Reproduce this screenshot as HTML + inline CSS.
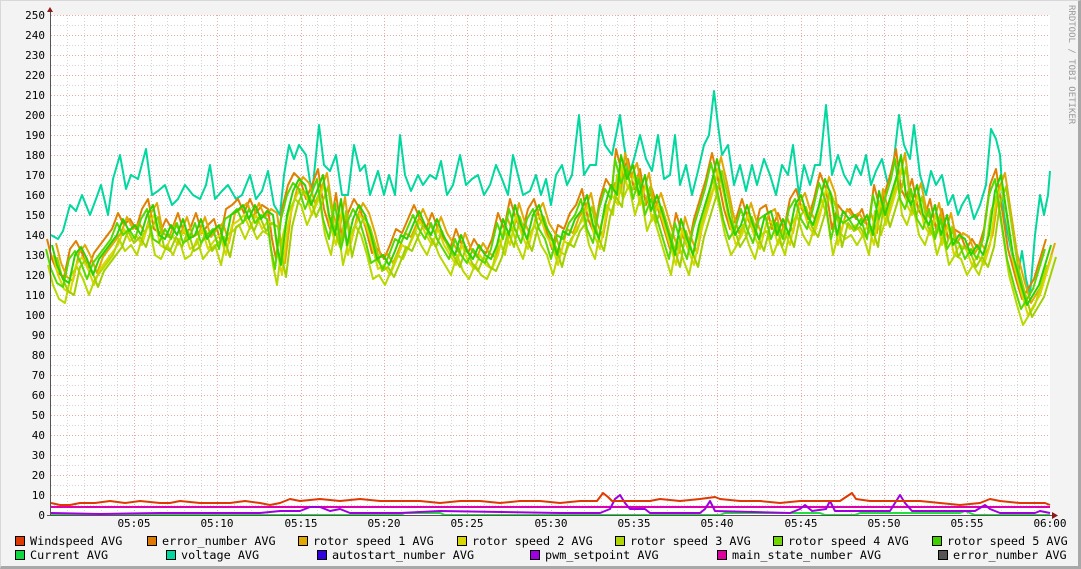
<!DOCTYPE html>
<html><head><meta charset="utf-8"><style>
html,body{margin:0;padding:0}
body{width:1081px;height:569px;background:#f3f3f3;position:relative;overflow:hidden;font-family:"DejaVu Sans Mono","Liberation Mono",monospace;}
.frame{position:absolute;left:0;top:0;box-sizing:border-box;width:1081px;height:569px;border-right:3px solid #a8a8a8;border-bottom:3px solid #a8a8a8;border-top:1px solid #d8d8d8;border-left:1px solid #d8d8d8}
.lg{position:absolute;font-size:11.8px;color:#000;white-space:pre;line-height:14px}
.sw{position:absolute;width:8px;height:8px;border:1px solid #000}
svg{position:absolute;left:0;top:0}
</style></head><body>
<div class="frame"></div>
<svg width="1081" height="569" xmlns="http://www.w3.org/2000/svg" font-family="DejaVu Sans Mono, Liberation Mono, monospace">
<defs>
<polyline id="r" fill="none" vector-effect="non-scaling-stroke" points="51,135 56,125 62,118 68,116 74,130 80,134 86,128 92,120 98,128 104,132 110,136 116,140 122,148 128,142 134,145 140,140 146,150 152,155 158,140 164,138 170,145 176,140 182,148 188,138 194,140 200,148 206,138 212,142 218,145 224,135 230,150 236,152 242,155 248,148 254,155 260,148 266,152 272,150 276,135 280,125 286,150 292,162 298,168 304,165 310,155 316,162 322,170 328,150 334,140 340,158 346,135 352,148 358,155 364,150 370,140 376,128 382,130 388,125 394,132 400,140 406,138 412,145 418,152 424,145 430,140 436,148 442,140 448,135 454,130 460,140 466,132 472,128 478,135 484,130 490,128 496,135 502,148 508,140 514,155 520,145 526,138 532,150 538,155 544,145 550,140 556,130 562,142 568,140 574,148 580,152 586,160 592,145 598,138 604,155 610,165 616,160 620,180 626,168 632,175 638,160 644,170 650,152 656,160 662,150 668,140 674,130 680,148 686,138 692,130 698,145 704,155 710,165 716,178 722,165 728,150 734,140 740,145 746,155 752,145 758,138 764,150 770,152 776,140 782,148 788,140 794,155 800,160 806,150 812,145 818,155 824,168 830,160 836,140 842,152 848,148 854,150 860,145 866,150 872,140 878,162 884,150 890,160 896,170 900,180 905,160 910,155 916,165 922,150 928,145 934,155 940,140 946,150 952,135 958,140 964,138 970,130 976,135 982,130 988,140 994,162 1000,170 1006,150 1012,130 1020,115 1026,105 1032,110 1038,115 1044,125 1050,135"/>
</defs>
<rect x="51" y="15" width="999" height="500" fill="#fff"/>
<g stroke="#d4d4d4" stroke-width="1" stroke-dasharray="1,2" shape-rendering="crispEdges">
<path d="M51 505.5H1050M51 485.5H1050M51 465.5H1050M51 445.5H1050M51 425.5H1050M51 405.5H1050M51 385.5H1050M51 365.5H1050M51 345.5H1050M51 325.5H1050M51 305.5H1050M51 285.5H1050M51 265.5H1050M51 245.5H1050M51 225.5H1050M51 205.5H1050M51 185.5H1050M51 165.5H1050M51 145.5H1050M51 125.5H1050M51 105.5H1050M51 85.5H1050M51 65.5H1050M51 45.5H1050M51 25.5H1050"/>
<path d="M67.5 15V515M84.5 15V515M101.5 15V515M117.5 15V515M151.5 15V515M167.5 15V515M184.5 15V515M201.5 15V515M234.5 15V515M251.5 15V515M267.5 15V515M284.5 15V515M317.5 15V515M334.5 15V515M351.5 15V515M367.5 15V515M401.5 15V515M417.5 15V515M434.5 15V515M451.5 15V515M484.5 15V515M501.5 15V515M517.5 15V515M534.5 15V515M567.5 15V515M584.5 15V515M601.5 15V515M617.5 15V515M651.5 15V515M667.5 15V515M684.5 15V515M701.5 15V515M734.5 15V515M751.5 15V515M767.5 15V515M784.5 15V515M817.5 15V515M834.5 15V515M851.5 15V515M867.5 15V515M901.5 15V515M917.5 15V515M934.5 15V515M951.5 15V515M984.5 15V515M1001.5 15V515M1017.5 15V515M1034.5 15V515"/>
</g>
<g stroke="#e8a8a8" stroke-width="1" stroke-dasharray="1,2" shape-rendering="crispEdges">
<path d="M51 495.5H1050M51 475.5H1050M51 455.5H1050M51 435.5H1050M51 415.5H1050M51 395.5H1050M51 375.5H1050M51 355.5H1050M51 335.5H1050M51 315.5H1050M51 295.5H1050M51 275.5H1050M51 255.5H1050M51 235.5H1050M51 215.5H1050M51 195.5H1050M51 175.5H1050M51 155.5H1050M51 135.5H1050M51 115.5H1050M51 95.5H1050M51 75.5H1050M51 55.5H1050M51 35.5H1050M51 15.5H1050"/>
<path d="M134.5 15V515M217.5 15V515M301.5 15V515M384.5 15V515M467.5 15V515M551.5 15V515M634.5 15V515M717.5 15V515M801.5 15V515M884.5 15V515M967.5 15V515"/>
</g>
<g fill="#000" font-size="11" text-anchor="end">
<text x="45" y="19">250</text><text x="45" y="39">240</text><text x="45" y="59">230</text><text x="45" y="79">220</text><text x="45" y="99">210</text><text x="45" y="119">200</text><text x="45" y="139">190</text><text x="45" y="159">180</text><text x="45" y="179">170</text><text x="45" y="199">160</text><text x="45" y="219">150</text><text x="45" y="239">140</text><text x="45" y="259">130</text><text x="45" y="279">120</text><text x="45" y="299">110</text><text x="45" y="319">100</text><text x="45" y="339">90</text><text x="45" y="359">80</text><text x="45" y="379">70</text><text x="45" y="399">60</text><text x="45" y="419">50</text><text x="45" y="439">40</text><text x="45" y="459">30</text><text x="45" y="479">20</text><text x="45" y="499">10</text><text x="45" y="519">0</text>
</g>
<g fill="#000" font-size="11" text-anchor="middle">
<text x="134" y="527">05:05</text><text x="217" y="527">05:10</text><text x="301" y="527">05:15</text><text x="384" y="527">05:20</text><text x="467" y="527">05:25</text><text x="551" y="527">05:30</text><text x="634" y="527">05:35</text><text x="717" y="527">05:40</text><text x="801" y="527">05:45</text><text x="884" y="527">05:50</text><text x="967" y="527">05:55</text><text x="1050" y="527">06:00</text>
</g>
<text x="1069" y="5" font-size="9" fill="#999" transform="rotate(90 1069 5)">RRDTOOL / TOBI OETIKER</text>
<g transform="translate(0,515) scale(1,-2)" fill="none" stroke-width="2" stroke-linejoin="round">
<polyline vector-effect="non-scaling-stroke" stroke="#00d8a0" points="51,140 58,138 63,142 70,155 76,152 82,160 90,150 96,158 101,165 108,150 113,168 120,180 126,163 131,170 138,168 146,183 152,160 158,162 165,165 172,155 178,158 185,165 193,160 200,158 206,165 210,175 215,158 222,162 228,165 236,158 242,160 250,170 256,158 262,162 268,172 274,155 280,150 284,170 289,185 294,178 299,185 306,180 312,160 319,195 324,175 330,172 336,180 342,160 348,160 354,185 360,172 365,175 370,160 378,172 384,160 389,170 395,160 400,190 405,170 411,162 418,170 423,165 430,170 436,168 441,177 447,160 453,165 460,180 466,165 472,168 478,170 484,160 490,165 496,175 502,168 508,160 513,180 518,170 523,160 530,162 536,170 541,160 546,168 551,155 556,170 562,175 567,165 572,170 579,200 584,170 590,175 596,175 600,195 605,185 612,180 620,200 624,185 629,170 634,178 640,190 646,178 652,172 658,190 664,168 670,170 675,190 680,165 686,175 692,160 698,172 704,185 709,190 714,212 718,195 722,180 728,185 734,165 740,175 746,162 752,175 757,165 764,178 770,170 776,160 782,175 788,170 793,185 799,160 804,175 810,165 815,175 820,175 826,205 832,170 838,180 844,170 850,165 856,175 861,170 866,180 871,165 876,172 882,178 888,165 894,178 899,200 904,185 910,178 914,195 920,170 926,160 931,172 936,165 942,170 948,155 953,160 958,150 962,155 968,160 974,148 980,155 986,165 991,193 996,188 1000,180 1004,150 1008,140 1013,128 1018,120 1022,132 1026,118 1030,110 1035,140 1040,160 1044,150 1048,160 1050,172"/>
<use href="#r" stroke="#e08000" transform="translate(-4,3)"/>
<use href="#r" stroke="#e0a800" transform="translate(5,1)"/>
<use href="#r" stroke="#d8d800" transform="translate(2,-5)"/>
<use href="#r" stroke="#b8d800" transform="translate(-3,-10)"/>
<use href="#r" stroke="#a0d000" transform="translate(6,-6)"/>
<use href="#r" stroke="#58d800" transform="translate(-5,-2)"/>
<use href="#r" stroke="#30d000" transform="translate(1,0)"/>
<polyline vector-effect="non-scaling-stroke" stroke="#20e040" points="51,0 400,0 405,1 440,1 445,0 720,0 725,1 820,1 825,0 855,0 860,1 960,1 965,2 975,0 1050,0"/>
<polyline vector-effect="non-scaling-stroke" stroke="#e000b0" points="51,4 1050,4"/>
<polyline vector-effect="non-scaling-stroke" stroke="#a000e0" points="51,1 100,0.5 160,1 260,1 280,2 300,2 310,4 320,4 330,2 340,3 350,1 400,1 440,2 560,1 600,1 610,3 615,8 620,10 625,6 630,3 645,3 650,1 700,1 705,3 710,7 712,5 715,2 790,1 800,3 805,5 812,2 826,3 830,7 835,2 890,2 895,6 900,10 905,6 912,2 975,2 985,5 990,3 1000,1 1035,1 1040,2 1050,1"/>
<polyline vector-effect="non-scaling-stroke" stroke="#e03800" points="51,6 60,5 70,5 80,6 95,6 110,7 125,6 140,7 160,6 170,6 180,7 200,6 215,6 230,6 245,7 260,6 270,5 280,6 290,8 300,7 320,8 340,7 360,8 380,7 400,7 420,7 440,6 460,7 480,7 500,6 520,7 540,7 560,6 580,7 597,7 603,11 608,9 612,7 630,7 650,7 660,8 680,7 700,8 715,9 720,8 740,7 760,7 780,6 800,7 820,7 840,7 846,9 852,11 856,8 870,7 890,7 905,7 920,7 940,6 960,5 980,6 990,8 1000,7 1020,6 1035,6 1045,6 1050,5"/>
</g>
<g stroke="#555" stroke-width="1" shape-rendering="crispEdges">
<path d="M50.5 12V516M47 515.5H1054"/>
</g>
<path d="M47 12L53 12L50 7Z" fill="#8b1a1a"/>
<path d="M1052 512L1052 519L1058 515.5Z" fill="#8b1a1a"/>
</svg>
<div class="sw" style="left:15px;top:536px;background:#e03800"></div><div class="lg" style="left:30px;top:534px">Windspeed AVG</div>
<div class="sw" style="left:147px;top:536px;background:#e07800"></div><div class="lg" style="left:162px;top:534px">error_number AVG</div>
<div class="sw" style="left:298px;top:536px;background:#e0a800"></div><div class="lg" style="left:313px;top:534px">rotor speed 1 AVG</div>
<div class="sw" style="left:457px;top:536px;background:#d8d800"></div><div class="lg" style="left:472px;top:534px">rotor speed 2 AVG</div>
<div class="sw" style="left:615px;top:536px;background:#b0d800"></div><div class="lg" style="left:630px;top:534px">rotor speed 3 AVG</div>
<div class="sw" style="left:773px;top:536px;background:#70d800"></div><div class="lg" style="left:788px;top:534px">rotor speed 4 AVG</div>
<div class="sw" style="left:932px;top:536px;background:#40d000"></div><div class="lg" style="left:947px;top:534px">rotor speed 5 AVG</div>
<div class="sw" style="left:15px;top:550px;background:#10d840"></div><div class="lg" style="left:30px;top:548px">Current AVG</div>
<div class="sw" style="left:166px;top:550px;background:#00d8a0"></div><div class="lg" style="left:181px;top:548px">voltage AVG</div>
<div class="sw" style="left:317px;top:550px;background:#3000e0"></div><div class="lg" style="left:332px;top:548px">autostart_number AVG</div>
<div class="sw" style="left:530px;top:550px;background:#a000e0"></div><div class="lg" style="left:545px;top:548px">pwm_setpoint AVG</div>
<div class="sw" style="left:717px;top:550px;background:#e000a0"></div><div class="lg" style="left:732px;top:548px">main_state_number AVG</div>
<div class="sw" style="left:938px;top:550px;background:#555"></div><div class="lg" style="left:953px;top:548px">error_number AVG</div>
</body></html>
